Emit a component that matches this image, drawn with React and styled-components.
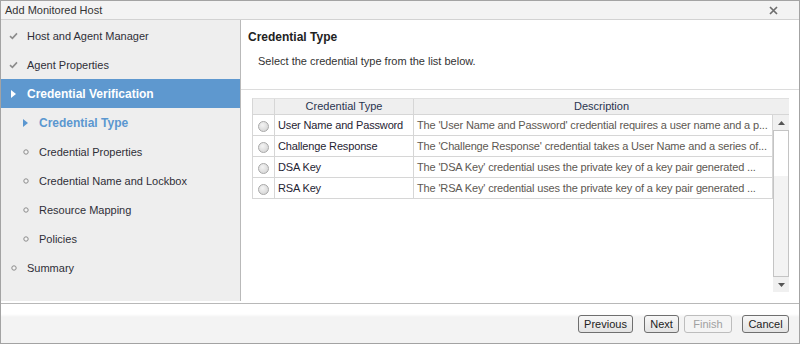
import React from "react";
import styled, { createGlobalStyle } from "styled-components";

const GlobalStyle = createGlobalStyle`
  body {
    margin: 0;
    background: #ffffff;
    font-family: "Liberation Sans", Arial, sans-serif;
  }
`;

const steps = [
  { label: "Host and Agent Manager", level: 0, icon: "check" },
  { label: "Agent Properties", level: 0, icon: "check" },
  { label: "Credential Verification", level: 0, icon: "arrow", state: "active" },
  { label: "Credential Type", level: 1, icon: "arrow", state: "current" },
  { label: "Credential Properties", level: 1, icon: "dot" },
  { label: "Credential Name and Lockbox", level: 1, icon: "dot" },
  { label: "Resource Mapping", level: 1, icon: "dot" },
  { label: "Policies", level: 1, icon: "dot" },
  { label: "Summary", level: 0, icon: "dot" },
];

const credentials = [
  {
    name: "User Name and Password",
    desc: "The 'User Name and Password' credential requires a user name and a p...",
  },
  {
    name: "Challenge Response",
    desc: "The 'Challenge Response' credential takes a User Name and a series of...",
  },
  {
    name: "DSA Key",
    desc: "The 'DSA Key' credential uses the private key of a key pair generated ...",
  },
  {
    name: "RSA Key",
    desc: "The 'RSA Key' credential uses the private key of a key pair generated ...",
  },
];

const StepIcon = ({ icon, state }) => {
  if (icon === "check") {
    return (
      <svg width="9" height="8" viewBox="0 0 9 8">
        <path d="M1 4.2 L3.4 6.4 L8 1.4" fill="none" stroke="#8c8c8c" strokeWidth="1.6" />
      </svg>
    );
  }
  if (icon === "arrow") {
    const color = state === "active" ? "#ffffff" : "#5b97d0";
    return (
      <svg width="5" height="8" viewBox="0 0 5 8">
        <path d="M0 0 L5 4 L0 8 Z" fill={color} />
      </svg>
    );
  }
  return (
    <svg width="6" height="6" viewBox="0 0 6 6">
      <circle cx="3" cy="3" r="2.2" fill="#f4f4f4" stroke="#8a8a8a" strokeWidth="1" />
    </svg>
  );
};

const App = () => {
  return (
    <>
      <GlobalStyle />
      <Window>
        <TitleBar>
          <Title>Add Monitored Host</Title>
          <CloseButton>
            <svg width="9" height="9" viewBox="0 0 9 9">
              <path d="M1 1 L8 8 M8 1 L1 8" stroke="#6e6e6e" strokeWidth="1.7" />
            </svg>
          </CloseButton>
        </TitleBar>

        <Body>
          <Sidebar>
            {steps.map((s) => (
              <Step key={s.label} $level={s.level} $state={s.state}>
                <IconBox>
                  <StepIcon icon={s.icon} state={s.state} />
                </IconBox>
                {s.label}
              </Step>
            ))}
          </Sidebar>

          <Panel>
            <PanelHeader>
              <PanelTitle>Credential Type</PanelTitle>
              <PanelText>Select the credential type from the list below.</PanelText>
            </PanelHeader>

            <ListArea>
              <ListBox>
                <HeaderRow>
                  <HeadCell $w="22px" />
                  <HeadCell $w="139px">Credential Type</HeadCell>
                  <HeadCell $grow>Description</HeadCell>
                </HeaderRow>
                <ListBody>
                  <Rows>
                    {credentials.map((c) => (
                      <Row key={c.name}>
                        <Cell $w="22px" $center>
                          <Radio />
                        </Cell>
                        <Cell $w="139px">{c.name}</Cell>
                        <Cell $grow $muted>
                          {c.desc}
                        </Cell>
                      </Row>
                    ))}
                  </Rows>
                  <Scrollbar>
                    <ScrollButton>
                      <svg width="7" height="4" viewBox="0 0 7 4">
                        <path d="M0 4 L3.5 0 L7 4 Z" fill="#555" />
                      </svg>
                    </ScrollButton>
                    <Track>
                      <Thumb />
                    </Track>
                    <ScrollButton>
                      <svg width="7" height="4" viewBox="0 0 7 4">
                        <path d="M0 0 L3.5 4 L7 0 Z" fill="#555" />
                      </svg>
                    </ScrollButton>
                  </Scrollbar>
                </ListBody>
              </ListBox>
            </ListArea>
          </Panel>
        </Body>

        <Footer>
          <Button $w="55px">Previous</Button>
          <Button $w="35px" $gap="11px">Next</Button>
          <Button $w="48px" $gap="5px" disabled>
            Finish
          </Button>
          <Button $w="47px" $gap="10px">Cancel</Button>
        </Footer>
      </Window>
    </>
  );
};

const Window = styled.div`
  width: 800px;
  height: 344px;
  box-sizing: border-box;
  border: 1px solid #a3a3a3;
  display: flex;
  flex-direction: column;
  background: #ffffff;
`;

const TitleBar = styled.div`
  height: 18px;
  flex-shrink: 0;
  display: flex;
  align-items: center;
  justify-content: space-between;
  padding: 0 21px 0 4px;
  background: #f3f3f3;
  border-bottom: 1px solid #d2d2d2;
`;

const Title = styled.div`
  font-size: 11px;
  color: #333;
`;

const CloseButton = styled.div`
  display: flex;
  align-items: center;
`;

const Body = styled.div`
  display: flex;
  height: 281px;
  flex-shrink: 0;
`;

const Sidebar = styled.div`
  width: 240px;
  flex-shrink: 0;
  padding-top: 1px;
  box-sizing: border-box;
  background: #eeeeee;
  border-right: 1px solid #b9b9b9;
`;

const Step = styled.div`
  height: 29px;
  display: flex;
  align-items: center;
  gap: 9px;
  padding-left: ${(p) => 8 + p.$level * 12}px;
  font-size: ${(p) => (p.$state ? "12px" : "11px")};
  font-weight: ${(p) => (p.$state ? 700 : 400)};
  color: ${(p) =>
    p.$state === "active" ? "#ffffff" : p.$state === "current" ? "#5b97d0" : "#2e2e38"};
  background: ${(p) => (p.$state === "active" ? "#5e98cf" : "transparent")};
`;

const IconBox = styled.span`
  width: 9px;
  display: flex;
  justify-content: center;
  align-items: center;
`;

const Panel = styled.div`
  flex: 1;
  display: flex;
  flex-direction: column;
`;

const PanelHeader = styled.div`
  height: 70px;
  flex-shrink: 0;
  padding: 10px 0 0 7px;
  box-sizing: border-box;
  border-bottom: 1px solid #dcdcdc;
`;

const PanelTitle = styled.div`
  font-size: 12px;
  font-weight: 700;
  line-height: 14px;
  color: #222;
`;

const PanelText = styled.div`
  margin: 11px 0 0 10px;
  font-size: 11px;
  line-height: 13px;
  color: #333;
`;

const ListArea = styled.div`
  flex: 1;
  padding: 8px 10px 8px 11px;
`;

const ListBox = styled.div`
  display: flex;
  flex-direction: column;
  height: 194px;
`;

const HeaderRow = styled.div`
  display: flex;
  height: 17px;
  box-sizing: border-box;
  background: #efefef;
  border-top: 1px solid #e0e0e0;
  border-left: 1px solid #d6d6d6;
  border-bottom: 1px solid #d6d6d6;
`;

const HeadCell = styled.div`
  width: ${(p) => p.$w || "auto"};
  flex: ${(p) => (p.$grow ? 1 : "none")};
  border-right: ${(p) => (p.$grow ? "0" : "1px solid #d6d6d6")};
  box-sizing: border-box;
  font-size: 11px;
  line-height: 15px;
  text-align: center;
  color: #2a3550;
`;

const ListBody = styled.div`
  display: flex;
  flex: 1;
`;

const Rows = styled.div`
  flex: 1;
`;

const Row = styled.div`
  display: flex;
  height: 21px;
  box-sizing: border-box;
  border-left: 1px solid #d6d6d6;
  border-bottom: 1px solid #d6d6d6;
`;

const Cell = styled.div`
  width: ${(p) => p.$w || "auto"};
  flex: ${(p) => (p.$grow ? 1 : "none")};
  min-width: 0;
  box-sizing: border-box;
  border-right: 1px solid #d6d6d6;
  display: flex;
  align-items: center;
  justify-content: ${(p) => (p.$center ? "center" : "flex-start")};
  padding: ${(p) => (p.$center ? "2px 0 0" : "0 3px")};
  font-size: 11px;
  letter-spacing: -0.15px;
  color: ${(p) => (p.$muted ? "#5d5852" : "#1f2433")};
  white-space: nowrap;
  overflow: hidden;
  text-overflow: ellipsis;
`;

const Radio = styled.span`
  width: 9px;
  height: 9px;
  border-radius: 50%;
  border: 1px solid #a8a8a8;
  background: radial-gradient(circle at 40% 35%, #f4f4f4, #cfcfcf);
`;

const Scrollbar = styled.div`
  width: 16px;
  display: flex;
  flex-direction: column;
`;

const ScrollButton = styled.div`
  height: 15px;
  display: flex;
  align-items: center;
  justify-content: center;
  background: #f0f0f0;
`;

const Track = styled.div`
  flex: 1;
  box-sizing: border-box;
  border: 1px solid #c4c4c4;
  background: #f3f3f3;
`;

const Thumb = styled.div`
  height: 45px;
  background: #ffffff;
`;

const Footer = styled.div`
  flex: 1;
  display: flex;
  justify-content: flex-end;
  align-items: flex-start;
  padding: 11px 10px 0 0;
  margin-top: 2px;
  border-top: 1px solid #b8b8b8;
  background: linear-gradient(#ffffff 0, #ffffff 10px, #f3f3f3 13px);
`;

const Button = styled.button`
  width: ${(p) => p.$w};
  height: 18px;
  margin-left: ${(p) => p.$gap || "0"};
  padding: 0;
  box-sizing: border-box;
  border: 1px solid ${(p) => (p.disabled ? "#bdbdbd" : "#6f6f6f")};
  border-radius: 3px;
  background: ${(p) => (p.disabled ? "#f4f4f4" : "linear-gradient(#f7f7f7, #e3e3e3)")};
  font-family: "Liberation Sans", Arial, sans-serif;
  font-size: 11px;
  color: ${(p) => (p.disabled ? "#a0a0a0" : "#222")};
`;

export default App;
